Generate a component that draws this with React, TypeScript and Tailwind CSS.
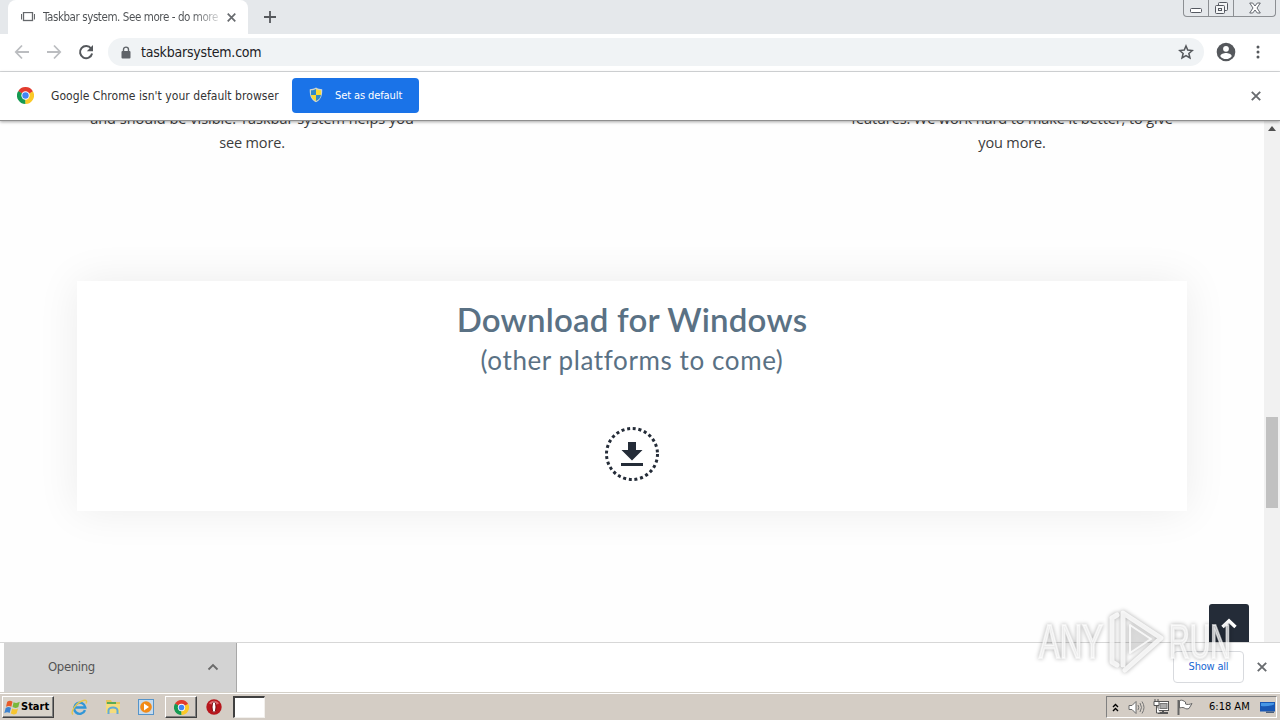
import type { ReactNode } from "react"

const BackIcon = ({ flip = false }: { flip?: boolean }) => (
  <svg width="16" height="16" viewBox="0 0 16 16" className={flip ? "rotate-180" : ""}>
    <path d="M15 8H2M8 1.5 1.8 8 8 14.5" fill="none" stroke="#bbbdc0" strokeWidth="1.8" />
  </svg>
)

const ReloadIcon = () => (
  <svg width="16" height="16" viewBox="0 0 16 16">
    <path d="M13.1 4.5A6.1 6.1 0 1 0 14.1 9.5" fill="none" stroke="#55585c" strokeWidth="2" />
    <path d="M15 1v6.2H8.8z" fill="#55585c" />
  </svg>
)

const LockIcon = () => (
  <svg width="10" height="13" viewBox="0 0 10 13">
    <path d="M2.5 6V3.6a2.5 2.5 0 0 1 5 0V6" fill="none" stroke="#5f6368" strokeWidth="1.4" />
    <rect x="0.5" y="5" width="9" height="7.5" rx="1" fill="#5f6368" />
  </svg>
)

const StarIcon = () => (
  <svg width="16" height="16" viewBox="0 0 24 24">
    <path
      d="m12 3 2.6 6.2 6.9.6-5.2 4.5 1.6 6.7-5.9-3.6L6.1 21l1.6-6.7L2.5 9.8l6.9-.6z"
      fill="none"
      stroke="#55585c"
      strokeWidth="2.3"
    />
  </svg>
)

const ProfileIcon = () => (
  <svg width="20" height="20" viewBox="0 0 20 20">
    <circle cx="10" cy="10" r="9.3" fill="#55585c" />
    <circle cx="10" cy="6.8" r="2.9" fill="#fff" />
    <path d="M4.3 14.2c0-2.2 3.7-3.3 5.7-3.3s5.7 1.1 5.7 3.3c-1.2 1.8-3.3 2.9-5.7 2.9s-4.5-1.1-5.7-2.9z" fill="#fff" />
  </svg>
)

const MenuDots = () => (
  <svg width="4" height="14" viewBox="0 0 4 14" fill="#55585c">
    <circle cx="2" cy="2" r="1.5" />
    <circle cx="2" cy="7" r="1.5" />
    <circle cx="2" cy="12" r="1.5" />
  </svg>
)

const CloseIcon = ({ size = 10 }: { size?: number }) => (
  <svg width={size} height={size} viewBox="0 0 10 10">
    <path d="m.8.8 8.4 8.4M9.2.8.8 9.2" stroke="#686b6f" strokeWidth="1.9" />
  </svg>
)

const ChromeIcon = ({ size = 16 }: { size?: number }) => (
  <svg width={size} height={size} viewBox="0 0 32 32">
    <path d="M16 16 2.14 8A16 16 0 0 1 29.86 8z" fill="#e23b2e" />
    <path d="M16 16 29.86 8A16 16 0 0 1 16 32z" fill="#fbc928" />
    <path d="M16 16V32A16 16 0 0 1 2.14 8z" fill="#159a52" />
    <path d="M16 8h13.86L16 16z" fill="#e23b2e" />
    <path d="M22.9 20 16 32V16z" fill="#fbc928" />
    <path d="M9.1 20 2.14 8 16 16z" fill="#159a52" />
    <circle cx="16" cy="16" r="7.8" fill="#fff" />
    <circle cx="16" cy="16" r="6" fill="#4285f4" />
  </svg>
)

const ShieldIcon = () => (
  <svg width="14" height="16" viewBox="0 0 14 16" className="-mt-px">
    <path d="M7 .6C5.3 1.8 3 2.2.8 2.2c-.3 5.8 1 10.4 6.2 13.1 5.2-2.7 6.5-7.3 6.2-13.1C11 2.2 8.7 1.8 7 .6z" fill="#cfd6cf" />
    <path d="M7 2C5.5 2.9 4 3.2 2 3.3V8h5z" fill="#2f8ac9" />
    <path d="M7 2c1.5.9 3 1.2 5 1.3V8H7z" fill="#f8da35" />
    <path d="M2 8c.3 2.6 2 4.6 5 6V8z" fill="#f8da35" />
    <path d="M12 8c-.3 2.6-2 4.6-5 6V8z" fill="#2f8ac9" />
  </svg>
)

const DownloadIcon = () => (
  <svg width="56" height="56" viewBox="0 0 56 56">
    <circle cx="28" cy="28" r="25.5" fill="none" stroke="#242c38" strokeWidth="3" strokeDasharray="3 2.722" />
    <path d="M24 16h8v8h6.5L28 34.5 17.5 24H24z" fill="#242c38" />
    <rect x="17" y="37" width="22" height="3" fill="#242c38" />
  </svg>
)

const WindowControls = () => (
  <div className="flex h-[17px] w-[93px] rounded-b-[4px] border border-t-0 border-[#8c8f93]">
    <div className="flex w-[25px] items-center justify-center border-r border-[#8c8f93]">
      <svg width="12" height="16" viewBox="0 0 12 16">
        <rect x=".5" y="8.5" width="11" height="4" rx="1" fill="#fff" stroke="#555961" />
      </svg>
    </div>
    <div className="flex w-[25px] items-center justify-center border-r border-[#8c8f93]">
      <svg width="13" height="14" viewBox="0 0 13 14" fill="#f4f5f6" stroke="#555961">
        <rect x="3.5" y="1.5" width="9" height="8" rx="1" />
        <rect x=".5" y="4.5" width="9" height="8" rx="1" />
        <rect x="3.5" y="7.5" width="3" height="2" />
      </svg>
    </div>
    <div className="flex flex-1 items-center justify-center">
      <svg width="12" height="12" viewBox="0 0 12 12">
        <path d="M.7 1h3L6 4l2.3-3h3L8 6l3.3 5h-3L6 8l-2.3 3h-3L4 6z" fill="#fff" stroke="#555961" strokeWidth=".9" />
      </svg>
    </div>
  </div>
)

const StartFlag = () => (
  <svg width="17" height="17" viewBox="0 0 16 16">
    <path d="M3 2.5c2-1.2 3.5-1 5 0L6.9 7.2c-1.5-.9-3.2-.9-5 .1z" fill="#e85b28" />
    <path d="M9 3c1.6.9 3.6 1 5.8-.3l-1.3 4.9c-1.9 1.1-3.8 1-5.5 0z" fill="#79b83b" />
    <path d="M1.6 8.4c1.8-1.1 3.5-1 5-.1l-1.3 4.8c-1.5-.9-3.2-.9-5 .2z" fill="#3d83cf" />
    <path d="M7.7 8.9c1.6 1 3.6 1.1 5.5 0l-1.3 4.8c-1.9 1.1-3.9 1-5.5 0z" fill="#f6c530" />
  </svg>
)

const ExplorerIcon = () => (
  <svg width="17" height="17" viewBox="0 0 17 17">
    <path d="M14 11.2A5.6 5.6 0 1 1 14.3 8.5H4.5" fill="none" stroke="#3196d7" strokeWidth="2.4" />
    <path d="M2 15.5C-1 13 5 3.5 12.5 1.5c3.3-.8 3.6 1.2 2.5 3" fill="none" stroke="#e5c74f" strokeWidth="1.4" />
  </svg>
)

const FolderIcon = () => (
  <svg width="16" height="16" viewBox="0 0 16 16">
    <path d="M1 1h5l1 2h8v10H1z" fill="#e6c55d" />
    <path d="M2 3h9v2H2z" fill="#5aab55" />
    <path d="M1 5h14v9H1z" fill="#f5dc7c" />
    <path d="M3.5 15v-3.500a4.500 3 0 0 1 9 0V15" fill="none" stroke="#62abd6" strokeWidth="2" />
  </svg>
)

const MediaIcon = () => (
  <svg width="16" height="16" viewBox="0 0 16 16">
    <rect x=".5" y=".5" width="15" height="15" fill="#c7dbed" stroke="#5594ca" />
    <circle cx="8" cy="8" r="5.8" fill="#f28a17" />
    <path d="m6 4.5 5 3.5-5 3.5z" fill="#fff" />
  </svg>
)

const OperaIcon = () => (
  <svg width="16" height="16" viewBox="0 0 16 16">
    <circle cx="8" cy="8" r="7.7" fill="#b7161c" />
    <path d="M3 4.5A6 6 0 0 1 13 4.5C10 6.5 6 6 3 4.5z" fill="#df676b" />
    <ellipse cx="8" cy="8" rx="2" ry="5.4" fill="#fff" stroke="#760c12" />
  </svg>
)

const SpeakerIcon = () => (
  <svg width="17" height="15" viewBox="0 0 17 15">
    <path d="M1 5.5h3L8 1.5v12l-4-4H1z" fill="#fff" stroke="#6b6b6b" />
    <path d="M10 5q1.5 2.5 0 5M12 3q3 4.5 0 9M14 1.500q4 6 0 12" fill="none" stroke="#777" />
  </svg>
)

const NetworkIcon = () => (
  <svg width="16" height="16" viewBox="0 0 16 16">
    <rect x="5" y="2.5" width="10.5" height="9" fill="#fff" stroke="#555" />
    <rect x="7" y="4.5" width="7" height="5" fill="#aaa" stroke="#777" />
    <path d="M5 14h10M10 12v2" stroke="#555" strokeWidth="2" />
    <path d="M1 2.5h5v4H1zM2 0v3M5 0v3M3.5 7v7H7" fill="#fff" stroke="#555" />
  </svg>
)

const FlagIcon = () => (
  <svg width="16" height="16" viewBox="0 0 16 16">
    <path d="M1.5 1v15" stroke="#666" strokeWidth="2" />
    <path d="M2.5 1.500c3-1 4 .5 6 1.500v2c2 .8 4 .6 6.500-.5l-3 5c-3 1.500-4.500-1-6-1-1 0-2.500 0-3.500.5z" fill="#fff" stroke="#666" />
  </svg>
)

const DesktopIcon = () => (
  <svg width="15" height="13" viewBox="0 0 15 13">
    <path d="M0 1h15v9.5H0z" fill="#1857b4" />
    <path d="M1 2h13v1.5Q7 6 1 5z" fill="#4596e6" />
    <path d="M6 10.5h8V12H6z" fill="#4a5f7c" />
  </svg>
)

const Watermark = () => (
  <svg
    width="210"
    height="80"
    viewBox="0 0 210 80"
    className="pointer-events-none absolute left-[1030px] top-[600px] drop-shadow-[0_0_2px_rgba(0,0,0,0.4)]"
  >
    <g
      fill="#ffffff"
      fillOpacity=".7"
      stroke="#ffffff"
      strokeOpacity=".6"
      strokeWidth="2.2"
      fontFamily="'Liberation Sans Narrow', 'Liberation Sans', sans-serif"
      fontSize="49"
    >
      <text x="9" y="58" textLength="64" lengthAdjust="spacingAndGlyphs">ANY</text>
      <text x="139" y="58" textLength="62" lengthAdjust="spacingAndGlyphs">RUN</text>
    </g>
    <g fill="none" stroke="#fff" strokeOpacity=".8" strokeLinejoin="round" strokeLinecap="round">
      <path d="M82 18v44l5 3M82 18l5-3" strokeWidth="5" />
      <path d="M93 65V13l38 25-36 32" strokeWidth="5" />
      <path d="M100 25v28l21-14z" strokeWidth="2" fill="#e7e7e7" fillOpacity=".5" />
    </g>
  </svg>
)

const TabStrip = () => (
  <div className="flex h-[34px] items-start justify-between bg-[#e5e8eb] pl-2 pr-[4px]">
    <div className="flex items-start">
      <div className="flex h-[34px] w-[240px] items-center rounded-t-lg bg-white pl-[13px] pr-[12px]">
        <svg width="14" height="10" viewBox="0 0 14 10" fill="none" stroke="#65686b">
          <rect x="2.5" y=".5" width="9" height="8" strokeWidth="1.3" />
          <path d="M.5 2v5.5M13.5 2v5.5M3 8.5h8" strokeWidth="1.1" />
        </svg>
        <span className="ml-[8px] w-[175px] whitespace-nowrap bg-gradient-to-r from-[#4c4f52] from-85% to-[#d5d6d7] bg-clip-text pt-px text-[11.5px] tracking-[-0.420px] text-transparent">
          Taskbar system. See more - do more
        </span>
        <span className="ml-auto">
          <CloseIcon size={9} />
        </span>
      </div>
      <svg width="12" height="12" viewBox="0 0 12 12" className="ml-4 mt-[11px]">
        <path d="M6 0v12M0 6h12" stroke="#55585c" strokeWidth="1.8" />
      </svg>
    </div>
    <WindowControls />
  </div>
)

const Toolbar = () => (
  <div className="flex h-[38px] items-center border-b border-[#d9dbdd] bg-white pb-px pl-[14px] pr-[20px]">
    <BackIcon />
    <span className="ml-4">
      <BackIcon flip />
    </span>
    <span className="ml-4">
      <ReloadIcon />
    </span>
    <div className="ml-[14px] flex h-7 w-[1096px] items-center rounded-full bg-[#f0f3f5] pl-[13px] pr-[10px]">
      <LockIcon />
      <span className="ml-[10px] text-[14px] tracking-[-0.200px] text-[#202124]">taskbarsystem.com</span>
      <span className="ml-auto">
        <StarIcon />
      </span>
    </div>
    <span className="ml-3">
      <ProfileIcon />
    </span>
    <span className="ml-auto">
      <MenuDots />
    </span>
  </div>
)

const InfoBar = () => (
  <div className="relative z-10 flex h-[49px] items-center border-b border-[#8f8f8f] bg-white pb-px pl-[17px] pr-[19px] shadow-[0_1px_3px_rgba(0,0,0,0.35)]">
    <ChromeIcon size={17} />
    <span className="ml-[17px] w-[241px] whitespace-nowrap text-[12px] tracking-[0.050px] text-[#333]">
      Google Chrome isn't your default browser
    </span>
    <button className="flex h-[35px] w-[127px] items-center rounded-[4px] bg-[#1a73e8] pl-[17px] text-white">
      <ShieldIcon />
      <span className="ml-3 whitespace-nowrap pt-[2px] text-[11px] tracking-[-0.100px]">Set as default</span>
    </button>
    <span className="ml-auto">
      <CloseIcon />
    </span>
  </div>
)

const Paragraph = ({ children }: { children: ReactNode }) => (
  <p className="w-[360px] whitespace-nowrap text-center font-['Open_Sans',sans-serif] text-[14.5px] leading-6 text-[#3c3c3c]">{children}</p>
)

const Page = () => (
  <main className="flex h-[521px] bg-[#fefefe]">
    <div className="h-full w-[1264px] overflow-hidden">
      <div className="-mt-[14px] flex justify-between px-[72px]">
        <Paragraph>
          and should be visible. Taskbar system helps you
          <br />
          <span className="tracking-[-0.150px]">see more.</span>
        </Paragraph>
        <Paragraph>
          <span className="tracking-[-0.100px]">features. We work hard to make it better, to give</span>
          <br />
          <span className="tracking-[-0.150px]">you more.</span>
        </Paragraph>
      </div>
      <section className="mx-[77px] mt-[126px] flex h-[230px] flex-col items-center bg-white pt-[18px] font-['Lato',sans-serif] text-[#5a7184] shadow-[0_0_40px_rgba(0,0,0,0.075)]">
        <h2 className="whitespace-nowrap text-[33px] font-semibold leading-10 tracking-[0.200px]">Download for Windows</h2>
        <p className="mt-px whitespace-nowrap text-[26px] leading-10 tracking-[0.600px]">(other platforms to come)</p>
        <span className="mt-[46px]">
          <DownloadIcon />
        </span>
      </section>
      <div className="mr-[15px] mt-[93px] flex justify-end">
        <div className="flex h-10 w-10 items-start justify-center rounded-t-[3px] bg-[#242c38] pt-[14px]">
          <svg width="16" height="11" viewBox="0 0 16 11">
            <path d="m1.500 9 6.500-6 6.500 6" fill="none" stroke="#fff" strokeWidth="3.5" />
          </svg>
        </div>
      </div>
    </div>
    <div className="flex w-4 flex-col items-center bg-[#f1f1f1] pt-[5px]">
      <svg width="8" height="5" viewBox="0 0 8 5">
        <path d="M0 5 4 0l4 5z" fill="#505050" />
      </svg>
      <div className="mt-[286px] h-[91px] w-3 bg-[#c1c1c1]" />
    </div>
  </main>
)

const DownloadShelf = () => (
  <div className="flex h-[50px] items-center border-t border-[#d7d7d7] bg-white pl-1 pr-[13px]">
    <div className="flex h-[49px] w-[233px] items-center justify-between border-r border-[#a8a8a8] bg-[#d3d3d3] pb-[2px] pl-11 pr-[17px] text-[13px] text-[#555]">
      <span className="tracking-[-0.350px]">Opening</span>
      <svg width="12" height="8" viewBox="0 0 12 8">
        <path d="m1.500 6.500 4.500-4.500 4.500 4.500" fill="none" stroke="#6a6a6a" strokeWidth="1.8" />
      </svg>
    </div>
    <button className="-mt-px ml-auto h-8 w-[71px] whitespace-nowrap rounded-[4px] border border-[#d8dade] pt-px text-[11px] tracking-[-0.200px] text-[#1967d2]">
      Show all
    </button>
    <span className="-mt-px ml-[13px]">
      <CloseIcon />
    </span>
  </div>
)

const Taskbar = () => (
  <div className="flex h-[28px] items-center border-t border-[#d4d0c8] bg-[#d4cdc5] pl-[2px] pr-[3px] pt-px shadow-[inset_0_1px_0_#fff]">
    <div className="flex h-[22px] w-[52px] items-center border border-b-[#404040] border-l-white border-r-[#404040] border-t-white bg-[#d8d3ca] pl-px shadow-[inset_-1px_-1px_0_#808080]">
      <StartFlag />
      <span className="text-[11px] font-bold text-black">Start</span>
    </div>
    <div className="flex items-center gap-[17px] pl-[17px]">
      <ExplorerIcon />
      <FolderIcon />
      <MediaIcon />
    </div>
    <div className="ml-[11px] flex h-[22px] w-8 items-center justify-center border border-b-[#404040] border-l-white border-r-[#404040] border-t-white shadow-[inset_-1px_-1px_0_#808080]">
      <ChromeIcon size={15} />
    </div>
    <span className="ml-[9px]">
      <OperaIcon />
    </span>
    <div className="ml-[11px] h-[22px] w-8 border border-l-2 border-t-2 border-b-[#f2f0ed] border-l-[#404040] border-r-[#f2f0ed] border-t-[#404040] bg-white" />
    <div className="ml-auto flex h-[22px] w-[171px] items-center border border-b-white border-l-[#808080] border-r-white border-t-[#808080] pl-[5px]">
      <svg width="7" height="9" viewBox="0 0 7 9">
        <path d="m1 4 2.500-2.500L6 4M1 8l2.500-2.500L6 8" fill="none" stroke="#000" strokeWidth="1.4" />
      </svg>
      <div className="ml-[9px] flex items-center gap-[8px]">
        <SpeakerIcon />
        <NetworkIcon />
        <FlagIcon />
      </div>
      <span className="ml-[16px] w-[51px] whitespace-nowrap pt-px text-[11px] text-black">6:18 AM</span>
      <DesktopIcon />
    </div>
  </div>
)

const App = () => (
  <div className="relative h-[720px] w-[1280px] overflow-hidden bg-white font-['DejaVu_Sans_Condensed','Noto_Sans',sans-serif]">
    <TabStrip />
    <Toolbar />
    <InfoBar />
    <Page />
    <DownloadShelf />
    <Taskbar />
    <Watermark />
  </div>
)

export default App
